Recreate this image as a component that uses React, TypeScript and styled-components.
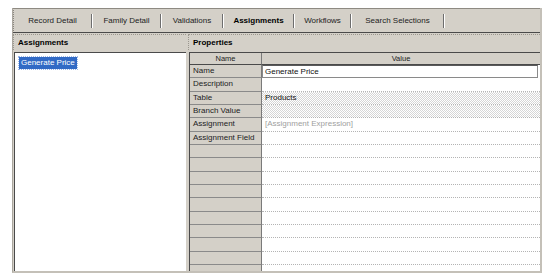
import React from 'react';
import styled, { createGlobalStyle, css } from 'styled-components';

const Global = createGlobalStyle`
  html, body { margin: 0; padding: 0; background: #ffffff; }
  body { font-family: "Liberation Sans", Arial, sans-serif; color: #000; }
`;

const Frame = styled.div`
  margin: 8px 0 0 12px;
  width: 530px;
  height: 265px;
  box-sizing: border-box;
  background: #d4d0c8;
  border-left: 1px solid #aaa69e;
  border-right: 2px solid #c4c0b8;
  border-bottom: 2px solid #c4c0b8;
  display: flex;
  flex-direction: column;
`;

const TabBar = styled.div`
  height: 25px;
  flex-shrink: 0;
  box-sizing: border-box;
  border-top: 1px solid #8e8a82;
  border-bottom: 1px solid #4a4a4a;
  display: flex;
  align-items: center;
`;

const TabStrip = styled.div`
  height: 21px;
  display: flex;
  align-items: center;
  border-left: 1px dotted #8a8680;
`;

const Tab = styled.div<{ $w: number; $active?: boolean }>`
  width: ${p => p.$w}px;
  text-align: center;
  font-size: 8px;
  font-weight: ${p => (p.$active ? 700 : 400)};
  color: ${p => (p.$active ? '#000' : '#222')};
  white-space: nowrap;
`;

const Sep = styled.div`
  width: 1px;
  height: 14px;
  background: #6e6e6e;
  border-right: 1px solid #ffffff;
`;

const Body = styled.div`
  flex: 1;
  display: flex;
  gap: 2px;
  padding-top: 1px;
  min-height: 0;
`;

const Panel = styled.div<{ $w?: number }>`
  display: flex;
  flex-direction: column;
  ${p => (p.$w ? css`width: ${p.$w}px;` : css`flex: 1;`)}
  min-width: 0;
`;

const PanelHeader = styled.div`
  height: 16px;
  flex-shrink: 0;
  box-sizing: border-box;
  border-top: 1px dotted #9a968e;
  border-left: 1px dotted #9a968e;
  padding-left: 4px;
  font-size: 8px;
  font-weight: 700;
  line-height: 15px;
  margin-bottom: 2px;
`;

const List = styled.div`
  flex: 1;
  margin-left: 1px;
  background: #ffffff;
  border-top: 1px solid #4a4a4a;
  border-left: 1px solid #4a4a4a;
  padding: 4px 0 0 4px;
  display: flex;
  flex-direction: column;
  align-items: flex-start;
`;

const Item = styled.div<{ $selected?: boolean }>`
  height: 12px;
  line-height: 12px;
  padding: 0 2px;
  font-size: 8px;
  ${p =>
    p.$selected &&
    css`
      background: #316ac5;
      color: #ffffff;
      outline: 1px dotted #9fb8e6;
    `}
`;

const Table = styled.div`
  flex: 1;
  margin-left: 1px;
  background: #ffffff;
  border-top: 1px solid #4a4a4a;
  border-left: 1px solid #4a4a4a;
  display: grid;
  grid-template-columns: 72px 1fr;
  grid-template-rows: 12px repeat(15, 13.35px) 1fr;
  overflow: hidden;
`;

const HeadCell = styled.div<{ $first?: boolean }>`
  background: #d4d0c8;
  border-bottom: 1px solid #4a4a4a;
  border-right: ${p => (p.$first ? '1px solid #7a7a7a' : 'none')};
  font-size: 7.5px;
  line-height: 11px;
  text-align: center;
  color: #222;
`;

const NameCell = styled.div`
  background: #d4d0c8;
  box-sizing: border-box;
  border-bottom: 1px solid #8a8a8a;
  border-right: 1px solid #7a7a7a;
  padding-left: 3px;
  font-size: 8px;
  line-height: 12.4px;
  white-space: nowrap;
  color: #222;
`;

const ValueCell = styled.div<{ $variant?: 'edit' | 'hatch' | 'hint' }>`
  box-sizing: border-box;
  border-bottom: 1px dotted #b4b4b4;
  padding-left: 3px;
  font-size: 8px;
  line-height: 12.4px;
  white-space: nowrap;
  color: #111;
  ${p =>
    p.$variant === 'edit' &&
    css`
      border: 1px solid #8a8a8a;
      border-top-color: #5a5a5a;
      line-height: 11px;
      padding-left: 2px;
      margin-right: 2px;
    `}
  ${p =>
    p.$variant === 'hatch' &&
    css`
      background: repeating-conic-gradient(#d6d6d6 0 25%, #ffffff 0 50%) 0 0 / 2px 2px;
    `}
  ${p =>
    p.$variant === 'hint' &&
    css`
      color: #a0a0a0;
    `}
`;

const FillName = styled.div`
  background: #d4d0c8;
  border-right: 1px solid #7a7a7a;
`;

const tabs = [
  { label: 'Record Detail', w: 77 },
  { label: 'Family Detail', w: 67 },
  { label: 'Validations', w: 60 },
  { label: 'Assignments', w: 69, active: true },
  { label: 'Workflows', w: 55 },
  { label: 'Search Selections', w: 91 },
];

type Row = { name: string; value?: string; variant?: 'edit' | 'hatch' | 'hint' };

const rows: Row[] = [
  { name: 'Name', value: 'Generate Price', variant: 'edit' },
  { name: 'Description' },
  { name: 'Table', value: 'Products', variant: 'hatch' },
  { name: 'Branch Value', variant: 'hatch' },
  { name: 'Assignment', value: '[Assignment Expression]', variant: 'hint' },
  { name: 'Assignment Field' },
];

while (rows.length < 15) rows.push({ name: '' });

export default function App() {
  return (
    <>
      <Global />
      <Frame>
        <TabBar>
          <TabStrip>
            {tabs.map(t => (
              <React.Fragment key={t.label}>
                <Tab $w={t.w} $active={t.active}>
                  {t.label}
                </Tab>
                <Sep />
              </React.Fragment>
            ))}
          </TabStrip>
        </TabBar>
        <Body>
          <Panel $w={173}>
            <PanelHeader>Assignments</PanelHeader>
            <List>
              <Item $selected>Generate Price</Item>
            </List>
          </Panel>
          <Panel>
            <PanelHeader>Properties</PanelHeader>
            <Table>
              <HeadCell $first>Name</HeadCell>
              <HeadCell>Value</HeadCell>
              {rows.map((r, i) => (
                <React.Fragment key={i}>
                  <NameCell>{r.name}</NameCell>
                  <ValueCell $variant={r.variant}>{r.value}</ValueCell>
                </React.Fragment>
              ))}
              <FillName />
              <div />
            </Table>
          </Panel>
        </Body>
      </Frame>
    </>
  );
}
